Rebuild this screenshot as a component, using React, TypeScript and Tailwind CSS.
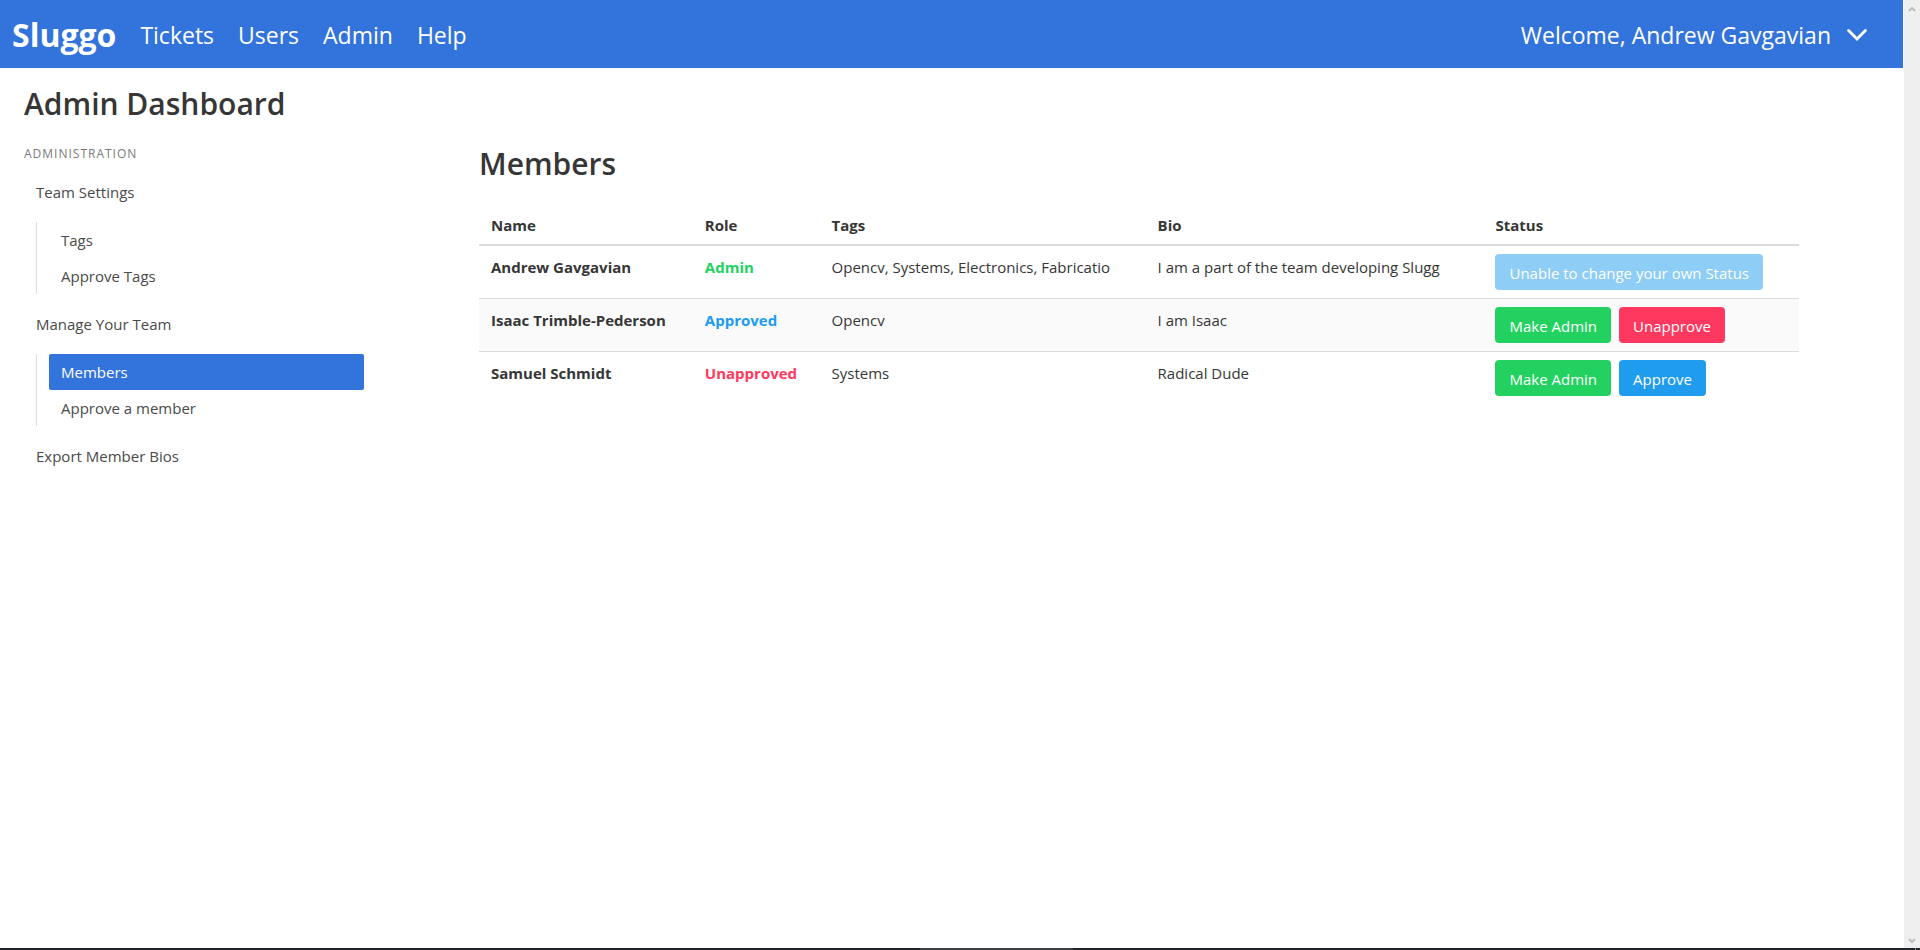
import type { ReactNode } from "react";

type ActionTone = "success" | "danger" | "info";

interface Action {
  label: string;
  tone: ActionTone;
  disabled?: boolean;
}

interface Member {
  name: string;
  role: string;
  roleClass: string;
  tags: string;
  bio: string;
  actions: Action[];
}

const toneClass: Record<ActionTone, string> = {
  success: "bg-[#23d160]",
  danger: "bg-[#ff3860]",
  info: "bg-[#209cee]",
};

const members: Member[] = [
  {
    name: "Andrew Gavgavian",
    role: "Admin",
    roleClass: "text-[#23d160]",
    tags: "Opencv, Systems, Electronics, Fabricatio",
    bio: "I am a part of the team developing Slugg",
    actions: [{ label: "Unable to change your own Status", tone: "info", disabled: true }],
  },
  {
    name: "Isaac Trimble-Pederson",
    role: "Approved",
    roleClass: "text-[#209cee]",
    tags: "Opencv",
    bio: "I am Isaac",
    actions: [
      { label: "Make Admin", tone: "success" },
      { label: "Unapprove", tone: "danger" },
    ],
  },
  {
    name: "Samuel Schmidt",
    role: "Unapproved",
    roleClass: "text-[#ff3860]",
    tags: "Systems",
    bio: "Radical Dude",
    actions: [
      { label: "Make Admin", tone: "success" },
      { label: "Approve", tone: "info" },
    ],
  },
];

const navLinks = ["Tickets", "Users", "Admin", "Help"];

function Navbar() {
  return (
    <nav className="flex h-17 items-center justify-between bg-[#3273dc] pt-0.5 pr-8 text-white">
      <div className="flex items-center">
        <a href="#" className="px-3 text-[32px] leading-9 font-bold">
          Sluggo
        </a>
        {navLinks.map((label) => (
          <a key={label} href="#" className="px-3 text-[23px] leading-9">
            {label}
          </a>
        ))}
      </div>
      <button type="button" className="flex items-center gap-4 text-[23px] leading-9">
        Welcome, Andrew Gavgavian
        <svg viewBox="0 0 20 12" className="mr-1 h-3 w-5" fill="none" aria-hidden="true">
          <path
            d="M1.6 1.6 L10 10 L18.4 1.6"
            stroke="currentColor"
            strokeWidth="2.8"
            strokeLinecap="round"
          />
        </svg>
      </button>
    </nav>
  );
}

function MenuLink({ children, active = false }: { children: ReactNode; active?: boolean }) {
  return (
    <a
      href="#"
      aria-current={active ? "page" : undefined}
      className={
        active
          ? "block rounded-xs bg-[#3273dc] px-3 py-2 leading-5 text-white"
          : "block rounded-xs px-3 py-2 leading-5 text-[#4a4a4a]"
      }
    >
      {children}
    </a>
  );
}

function SubMenu({ children }: { children: ReactNode }) {
  return <ul className="my-3 ml-3 border-l border-[#dbdbdb] pl-3">{children}</ul>;
}

function Sidebar() {
  return (
    <aside className="w-[340px] shrink-0 pt-0.5">
      <p className="mb-3 text-xs leading-4 tracking-[1px] text-[#7a7a7a] uppercase">
        Administration
      </p>
      <ul>
        <li>
          <MenuLink>Team Settings</MenuLink>
          <SubMenu>
            <li>
              <MenuLink>Tags</MenuLink>
            </li>
            <li>
              <MenuLink>Approve Tags</MenuLink>
            </li>
          </SubMenu>
        </li>
        <li>
          <MenuLink>Manage Your Team</MenuLink>
          <SubMenu>
            <li>
              <MenuLink active>Members</MenuLink>
            </li>
            <li>
              <MenuLink>Approve a member</MenuLink>
            </li>
          </SubMenu>
        </li>
        <li>
          <MenuLink>Export Member Bios</MenuLink>
        </li>
      </ul>
    </aside>
  );
}

function MembersTable() {
  return (
    <table className="w-full table-fixed text-left text-[#363636]">
      <thead>
        <tr className="border-b-2 border-[#dbdbdb]">
          <th className="w-[16.2%] px-3 pt-[9px] pb-[7px] font-bold">Name</th>
          <th className="w-[9.6%] px-3 pt-[9px] pb-[7px] font-bold">Role</th>
          <th className="w-[24.7%] px-3 pt-[9px] pb-[7px] font-bold">Tags</th>
          <th className="w-[25.6%] px-3 pt-[9px] pb-[7px] font-bold">Bio</th>
          <th className="px-3 pt-[9px] pb-[7px] font-bold">Status</th>
        </tr>
      </thead>
      <tbody>
        {members.map((m) => (
          <tr
            key={m.name}
            className="border-b border-[#dbdbdb] align-top last:border-b-0 even:bg-[#fafafa]"
          >
            <th scope="row" className="px-3 pt-[9px] pb-[7px] font-bold whitespace-nowrap">
              {m.name}
            </th>
            <td className={`px-3 pt-[9px] pb-[7px] font-bold ${m.roleClass}`}>{m.role}</td>
            <td className="px-3 pt-[9px] pb-[7px]">{m.tags}</td>
            <td className="px-3 pt-[9px] pb-[7px]">{m.bio}</td>
            <td className="px-3 py-2">
              <div className="flex gap-2">
                {m.actions.map((a) => (
                  <button
                    key={a.label}
                    type="button"
                    disabled={a.disabled}
                    className={`h-9 rounded-sm px-3.5 pt-0.5 whitespace-nowrap text-white disabled:opacity-50 ${toneClass[a.tone]}`}
                  >
                    {a.label}
                  </button>
                ))}
              </div>
            </td>
          </tr>
        ))}
      </tbody>
    </table>
  );
}

function ScrollRail() {
  return (
    <div
      className="ml-px flex w-4 shrink-0 flex-col items-center justify-between bg-[#efefef] pt-1.5 pb-1 text-[#bdbdbd]"
      aria-hidden="true"
    >
      <svg viewBox="0 0 8 6" className="h-1.5 w-2" fill="none">
        <path d="M1 5 L4 2 L7 5" stroke="currentColor" strokeWidth="2" />
      </svg>
      <svg viewBox="0 0 8 6" className="h-1.5 w-2" fill="none">
        <path d="M1 1 L4 4 L7 1" stroke="currentColor" strokeWidth="2" />
      </svg>
    </div>
  );
}

export default function App() {
  return (
    <div className="flex min-h-screen flex-col bg-white font-['Open_Sans','Noto_Sans',sans-serif] text-[15px] leading-6">
      <div className="flex grow">
        <div className="min-w-0 grow">
          <Navbar />
          <div className="px-6 pt-4">
            <h1 className="text-[30px] leading-10 font-semibold text-[#363636]">
              Admin Dashboard
            </h1>
            <div className="flex gap-[115px] pt-5">
              <Sidebar />
              <main className="min-w-0 grow pr-20">
                <h2 className="mb-5 text-[30px] leading-10 font-semibold text-[#363636]">
                  Members
                </h2>
                <MembersTable />
              </main>
            </div>
          </div>
        </div>
        <ScrollRail />
      </div>
      <div className="flex h-0.5 justify-between bg-[#20232a] pr-1">
        <div className="ml-[48%] w-[8%] bg-[#3b3f45]" />
        <div className="w-px bg-[#8a8c90]" />
      </div>
    </div>
  );
}
